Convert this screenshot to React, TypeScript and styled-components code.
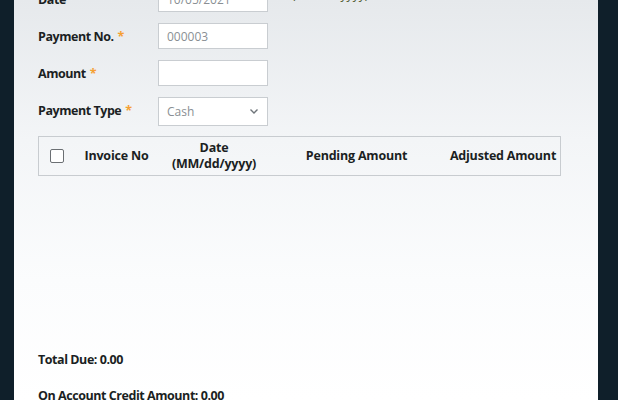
import React from "react";
import styled, { createGlobalStyle } from "styled-components";

const Global = createGlobalStyle`
  html, body { margin: 0; padding: 0; background: #0f1f2a; overflow: hidden; }
  body { font-family: "Open Sans", "Noto Sans", sans-serif; color: #1b1f23; }
`;

const Page = styled.div`
  width: 618px;
  height: 400px;
  overflow: hidden;
  background: #0f1f2a;
`;

const Panel = styled.div`
  margin: 0 20px 0 14px;
  height: 400px;
  background: linear-gradient(180deg, #e6e9ec 0%, #f3f5f7 35%, #fbfcfd 70%, #ffffff 100%);
  padding: 0 24px;
  display: flex;
  flex-direction: column;
  overflow: hidden;
`;

const Form = styled.div`
  margin-top: -14px;
  display: flex;
  flex-direction: column;
  gap: 11px;
`;

const Row = styled.div`
  display: flex;
  align-items: center;
  height: 26px;
`;

const Label = styled.div`
  width: 120px;
  font-size: 12.5px;
  font-weight: 700;
  letter-spacing: -0.45px;
  padding-top: 1px;
`;

const Star = styled.span`
  color: #f5a033;
  margin-left: 4px;
`;

const Input = styled.div<{ $select?: boolean }>`
  box-sizing: border-box;
  width: 110px;
  height: ${(p) => (p.$select ? "29px" : "26px")};
  margin-top: ${(p) => (p.$select ? "2px" : "0")};
  background: #fff;
  border: 1px solid #c9cdd1;
  display: flex;
  align-items: center;
  justify-content: space-between;
  padding: 0 8px;
  font-size: 12px;
  color: #8a8f94;
`;

const Hint = styled.span`
  margin-left: 24px;
  font-size: 12px;
  line-height: 17px;
  color: #4e5a2c;
  align-self: flex-start;
`;

const Table = styled.div`
  margin-top: 13px;
  width: 523px;
  box-sizing: border-box;
  border: 1px solid #c8ccd0;
  display: grid;
  grid-template-columns: 35px 85px 110px 175px 118px;
  align-items: center;
  height: 40px;
`;

const Th = styled.div`
  font-size: 12.5px;
  font-weight: 700;
  text-align: center;
  line-height: 16px;
  letter-spacing: -0.2px;
  white-space: nowrap;
`;

const Check = styled.div`
  width: 12px;
  height: 12px;
  border: 1px solid #6b6f73;
  border-radius: 2px;
  background: #fff;
  justify-self: center;
  margin-left: 1px;
`;

const Summary = styled.div`
  margin-top: auto;
  display: flex;
  flex-direction: column;
  gap: 19px;
  margin-bottom: -4px;
`;

const SumLine = styled.div`
  font-size: 12.5px;
  font-weight: 700;
  letter-spacing: -0.45px;
  line-height: 17px;
`;

const Chevron = () => (
  <svg width="10" height="10" viewBox="0 0 10 10">
    <path d="M1.5 3.5 L5 7 L8.5 3.5" fill="none" stroke="#6f757a" strokeWidth="1.4" />
  </svg>
);

export default function App() {
  return (
    <Page>
      <Global />
      <Panel>
        <Form>
          <Row>
            <Label>Date</Label>
            <Input>10/05/2021</Input>
            <Hint>(MM/dd/yyyy)</Hint>
          </Row>
          <Row>
            <Label>
              Payment No.<Star>*</Star>
            </Label>
            <Input>000003</Input>
          </Row>
          <Row>
            <Label>
              Amount<Star>*</Star>
            </Label>
            <Input />
          </Row>
          <Row>
            <Label>
              Payment Type<Star>*</Star>
            </Label>
            <Input $select>
              Cash
              <Chevron />
            </Input>
          </Row>
        </Form>
        <Table>
          <Check />
          <Th>Invoice No</Th>
          <Th>
            Date
            <br />
            (MM/dd/yyyy)
          </Th>
          <Th>Pending Amount</Th>
          <Th>Adjusted Amount</Th>
        </Table>
        <Summary>
          <SumLine>Total Due: 0.00</SumLine>
          <SumLine>On Account Credit Amount: 0.00</SumLine>
        </Summary>
      </Panel>
    </Page>
  );
}
